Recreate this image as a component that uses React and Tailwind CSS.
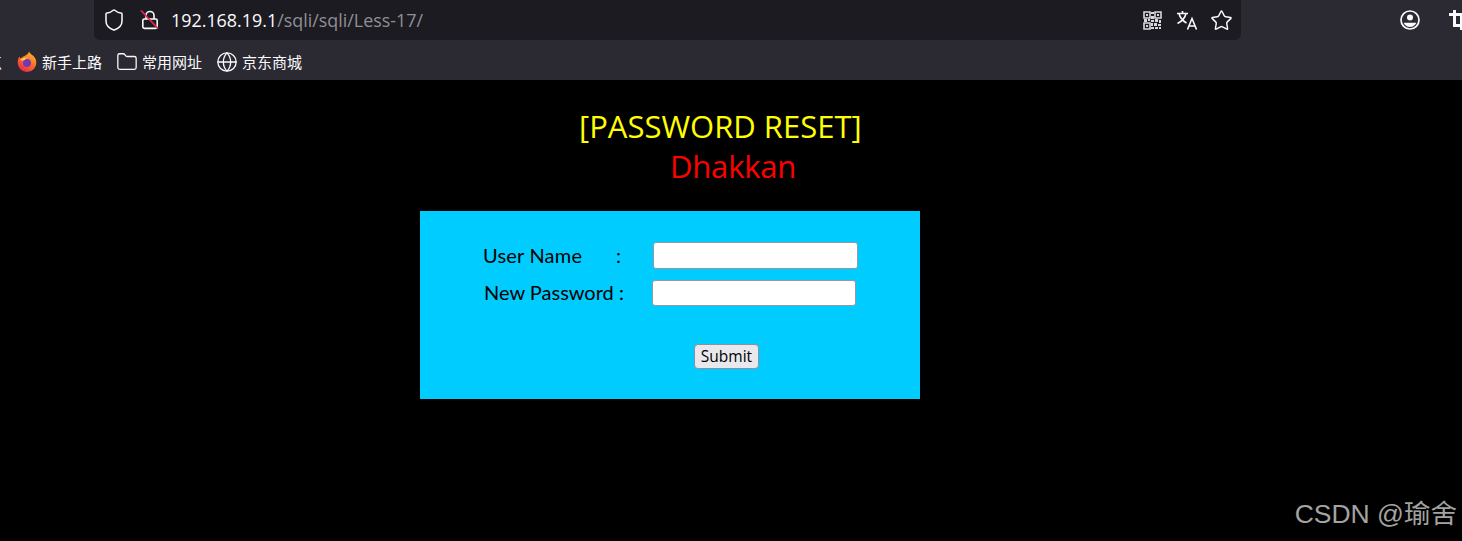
import React from 'react';
import { Globe, Folder, Shield, Star } from 'lucide-react';

const uiFont = { fontFamily: '"Open Sans", "Noto Sans CJK SC", sans-serif' };

const LockOff = () => (
  <svg width="20" height="22" viewBox="0 0 20 22" fill="none" className="shrink-0">
    <path d="M6 10V6.500a4 4 0 0 1 8 0V10" stroke="#fbfbfe" strokeWidth="1.6" />
    <rect x="2.800" y="10" width="14.400" height="9.400" rx="1.600" stroke="#fbfbfe" strokeWidth="1.6" />
    <path d="M1 1.500 18 19.500" stroke="#e22850" strokeWidth="1.8" />
  </svg>
);

const QrIcon = () => (
  <svg width="19" height="19" viewBox="0 0 19 19" fill="none" className="mr-[2px] shrink-0">
    <path d="M1 1h6v6H1zM12 1h6v6h-6zM1 12h6v6H1z" stroke="#d8d8dc" strokeWidth="1.6" />
    <path d="M3 3h2v2H3zM14 3h2v2h-2zM3 14h2v2H3zM8 1h3v2H8zM8 5h3v3H8zM1 8h3v3H1zM5 8h2v2H5zM8 9h3v2H8zM12 8h3v3h-3zM16 9h2v3h-2zM8 12h2v3H8zM11 12h3v3h-3zM15 13h3v2h-3zM8 16h3v2H8zM12 16h3v2h-3zM16 16h2v2h-2z" fill="#d8d8dc" />
  </svg>
);

const TranslateIcon = () => (
  <svg width="22" height="20" viewBox="0 0 22 20" fill="none" className="shrink-0">
    <path d="M1 3.500h11M6.500 1v2.500M10 3.500C9 8 5.500 11.500 1.500 13.500M3 3.500c1 4 4 7.500 7.500 9.500" stroke="#fbfbfe" strokeWidth="1.6" />
    <path d="M11.500 19.500 16 8.500l4.500 11M13 16h6" stroke="#fbfbfe" strokeWidth="1.6" />
  </svg>
);

const AccountIcon = () => (
  <svg width="20" height="20" viewBox="0 0 20 20" fill="none" className="shrink-0">
    <circle cx="10" cy="10" r="9" stroke="#fbfbfe" strokeWidth="1.7" />
    <circle cx="10" cy="7.600" r="3" fill="#fbfbfe" />
    <path d="M3.600 12.800h12.800A7 7 0 0 1 3.600 12.800z" fill="#fbfbfe" />
  </svg>
);

const CropIcon = () => (
  <svg width="20" height="22" viewBox="0 0 20 22" fill="none" className="shrink-0">
    <path d="M5.500 1v15.500H18M0 5.500h12.500V21" stroke="#fbfbfe" strokeWidth="3" />
  </svg>
);

const FirefoxIcon = () => (
  <svg width="20" height="22" viewBox="0 0 20 22" className="shrink-0">
    <defs>
      <linearGradient id="fx" x1="0.8" y1="0" x2="0.2" y2="1">
        <stop offset="0" stopColor="#ffbd2e" />
        <stop offset="0.5" stopColor="#ff6a28" />
        <stop offset="1" stopColor="#e5234f" />
      </linearGradient>
    </defs>
    <path d="M10 21a9.300 9.300 0 0 1-9.300-9.500C.7 9 1.500 7 2.600 5.600l.9 2C5 6 7.500 5 9.500 3.700 11 2.800 11.800 1.500 12 .5c.6 1.500 2 2.700 3.500 3.800C18 6.200 19.300 8.700 19.300 11.500A9.300 9.300 0 0 1 10 21z" fill="url(#fx)" />
    <circle cx="10" cy="12" r="4" fill="#6f3bb5" />
    <path d="M3 9c2-2 5-3 8-2.400-1.500.4-2.500 1.200-3 2.400-1.500.4-3 .6-5 0z" fill="#ffcf4a" />
  </svg>
);

const Bookmark = ({ icon, label }) => (
  <div className="flex shrink-0 items-center gap-[5px]">
    {icon}
    <span className="text-[15px] leading-none text-[#fbfbfe]">{label}</span>
  </div>
);

const BrowserBar = () => (
  <div className="h-[80px] bg-[#2b2a33]" style={uiFont}>
    <div className="flex h-[40px]">
      <div className="ml-[94px] flex h-[40px] w-[1147px] shrink-0 items-center rounded-b-md bg-[#1c1b22] pl-[8px] pr-[8px]">
        <Shield size={24} color="#fbfbfe" strokeWidth={1.5} />
        <div className="ml-[14px]">
          <LockOff />
        </div>
        <div className="ml-[11px] pt-[2px] text-[17.900px] leading-none">
          <span className="text-[#fbfbfe]">192.168.19.1</span>
          <span className="text-[#8f8f94]">/sqli/sqli/Less-17/</span>
        </div>
        <div className="ml-auto flex items-center gap-[12px]">
          <QrIcon />
          <TranslateIcon />
          <Star size={23} color="#fbfbfe" strokeWidth={1.5} />
        </div>
      </div>
      <div className="ml-[159px] flex shrink-0 items-center gap-[29px]">
        <AccountIcon />
        <CropIcon />
      </div>
    </div>
    <div className="flex h-[40px] items-center gap-[15px] pb-[5px] pt-[9px]">
      <span className="-ml-[13px] shrink-0 text-[15px] leading-none text-[#fbfbfe]">点</span>
      <Bookmark icon={<FirefoxIcon />} label="新手上路" />
      <Bookmark icon={<Folder size={22} color="#fbfbfe" strokeWidth={1.4} className="-mx-[1px]" />} label="常用网址" />
      <Bookmark icon={<Globe size={22} color="#fbfbfe" strokeWidth={1.4} className="-mx-[1px]" />} label="京东商城" />
    </div>
  </div>
);

const Field = ({ className }) => (
  <input
    type="text"
    className={`rounded-[3px] border border-[#8f9aa3] bg-white ${className}`}
  />
);

export default function App() {
  return (
    <div className="relative h-[541px] overflow-hidden bg-black">
      <BrowserBar />
      <div style={{ fontFamily: '"Open Sans", sans-serif' }}>
        <div className="pl-[579px] pt-[26px] text-[31px] leading-[40px] text-[#ffff00]">[PASSWORD RESET]</div>
        <div className="pl-[670px] text-[31px] leading-[40px] tracking-[-0.2px] text-[#ff0000]">Dhakkan</div>
      </div>
      <div
        className="ml-[420px] mt-[25px] h-[188px] w-[500px] bg-[#00ccff] pt-[31px] text-[20px] text-black"
        style={{ fontFamily: '"Lato", sans-serif' }}
      >
        <div className="flex h-[27px] items-center">
          <span className="ml-[63px] w-[133px] pb-[2px] tracking-[0.2px]">User Name</span>
          <span className="w-[37px] pb-[2px]">:</span>
          <Field className="h-[27px] w-[205px]" />
        </div>
        <div className="mt-[10px] flex h-[27px] items-center">
          <span className="ml-[64px] w-[168px] pb-[2px]">New Password :</span>
          <Field className="h-[26px] w-[204px]" />
        </div>
        <div className="mt-[38px] flex pl-[274px]">
          <button
            type="button"
            className="h-[25px] w-[65px] rounded-[4px] border border-[#8f8f9d] bg-[#e9e9ed] text-[15.500px] leading-none text-black"
            style={{ fontFamily: '"Open Sans", sans-serif' }}
          >
            Submit
          </button>
        </div>
      </div>
      <div
        className="absolute right-[5px] bottom-[14px] text-[26.500px] leading-none text-[#a3a3a3]"
        style={{ fontFamily: '"Liberation Sans", "Noto Sans CJK SC", sans-serif' }}
      >
        CSDN @瑜舍
      </div>
    </div>
  );
}
